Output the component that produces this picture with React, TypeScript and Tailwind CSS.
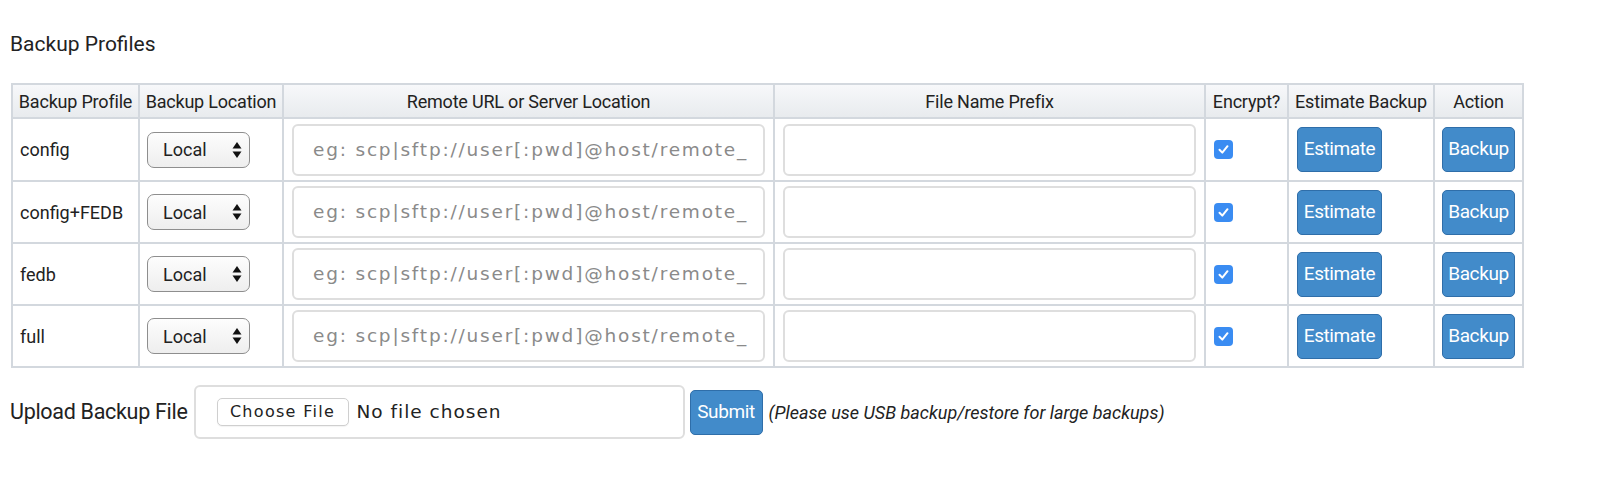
import React from "react";

const profiles = ["config", "config+FEDB", "fedb", "full"];
const headers = ["Backup Profile", "Backup Location", "Remote URL or Server Location", "File Name Prefix", "Encrypt?", "Estimate Backup", "Action"];

const cellFont = { fontFamily: "Roboto, 'Liberation Sans', sans-serif" };
const wideFont = { fontFamily: "'DejaVu Sans', 'Liberation Sans', sans-serif" };

function LocationSelect() {
  return (
    <div className="flex h-[36px] w-[103px] items-center justify-between rounded-[7px] border border-[#8e8e8e] bg-gradient-to-b from-[#fdfdfd] to-[#eeeeee] pl-[15px] pr-[7px] text-[18px] text-[#222]">
      <span>Local</span>
      <svg width="10" height="18" viewBox="0 0 10 18" className="shrink-0">
        <path d="M5 1 L9.5 7.5 H0.5 Z" fill="#111" />
        <path d="M5 17 L9.5 10.5 H0.5 Z" fill="#111" />
      </svg>
    </div>
  );
}

function CheckMark() {
  return (
    <div className="flex h-[19px] w-[19px] items-center justify-center rounded-[4px] bg-[#3a8cf2]">
      <svg width="13" height="13" viewBox="0 0 13 13">
        <path d="M2.5 6.8 L5.3 9.6 L10.5 3.2" fill="none" stroke="#fff" strokeWidth="2" strokeLinecap="round" strokeLinejoin="round" />
      </svg>
    </div>
  );
}

function BlueButton({ label, className }: { label: string; className?: string }) {
  return (
    <button
      type="button"
      className={
        "flex items-center justify-center rounded-[5px] border border-[#2f6ea9] bg-[#428bca] text-[19px] tracking-[-0.4px] text-white " +
        (className ?? "")
      }
    >
      {label}
    </button>
  );
}

function TextBox({ placeholder, className }: { placeholder?: string; className?: string }) {
  return (
    <div
      className={
        "flex h-[52px] items-center overflow-hidden whitespace-nowrap rounded-[6px] border-2 border-[#dedede] bg-white text-[18.5px] tracking-[1.8px] text-[#8a8a8a] " +
        (className ?? "")
      }
      style={wideFont}
    >
      {placeholder}
    </div>
  );
}

const cell = "flex items-center border-b-2 border-r-2 border-[#d3d8de]";

export default function App() {
  return (
    <div className="w-full bg-white pb-[20px] text-[#222]" style={cellFont}>
      <div className="pl-[10px] pt-[29px] text-[21px] leading-[30px]">Backup Profiles</div>

      <div className="ml-[11px] mt-[24px] grid w-[1513px] grid-cols-[127px_144px_491px_431px_83px_146px_89px] grid-rows-[34px_63px_62px_62px_62px] border-l-2 border-t-2 border-[#d3d8de] text-[18px]">
        {headers.map((h) => (
          <div
            key={h}
            className={cell + " justify-center whitespace-nowrap bg-gradient-to-b from-[#f7f8fa] to-[#e8ebee] text-[18px] tracking-[-0.2px]"}
          >
            {h}
          </div>
        ))}
        {profiles.map((p) => (
          <React.Fragment key={p}>
            <div className={cell + " px-[7px]"}>{p}</div>
            <div className={cell + " px-[7px]"}>
              <LocationSelect />
            </div>
            <div className={cell + " px-[8px]"}>
              <TextBox placeholder="eg: scp|sftp://user[:pwd]@host/remote_" className="w-[475px] pl-[19px]" />
            </div>
            <div className={cell + " px-[8px]"}>
              <TextBox className="w-[415px]" />
            </div>
            <div className={cell + " px-[8px]"}>
              <CheckMark />
            </div>
            <div className={cell + " px-[8px]"}>
              <BlueButton label="Estimate" className="h-[45px] w-[85px]" />
            </div>
            <div className={cell + " px-[7px]"}>
              <BlueButton label="Backup" className="h-[45px] w-[74px]" />
            </div>
          </React.Fragment>
        ))}
      </div>

      <div className="mt-[17px] flex items-center pl-[10px]">
        <span className="mr-[6px] text-[21.5px] tracking-[-0.3px]">Upload Backup File</span>
        <div
          className="flex h-[54px] w-[491px] items-center rounded-[6px] border-2 border-[#dedede] pl-[21px] text-[18.5px] tracking-[1px] text-[#222]"
          style={wideFont}
        >
          <span className="flex h-[28px] w-[132px] items-center justify-center rounded-[5px] border border-[#cfcfcf] bg-white text-[16px] tracking-[1.3px] shadow-[0_1px_1px_rgba(0,0,0,0.05)]">
            Choose File
          </span>
          <span className="ml-[8px]">No file chosen</span>
        </div>
        <BlueButton label="Submit" className="ml-[5px] h-[45px] w-[73px] text-[18px]" />
        <span className="ml-[6px] text-[18px] italic text-[#222]">(Please use USB backup/restore for large backups)</span>
      </div>
    </div>
  );
}
